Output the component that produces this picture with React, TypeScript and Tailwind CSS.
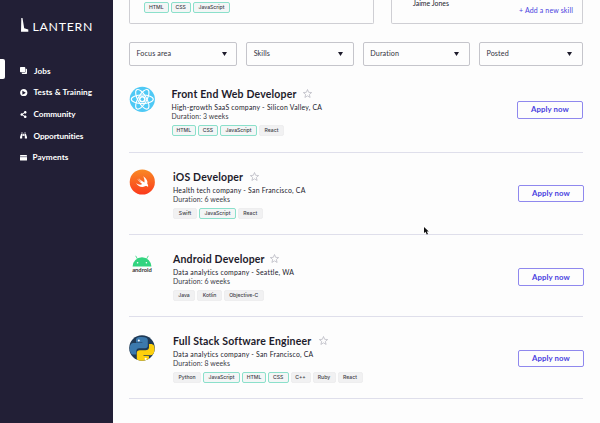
import React from "react";
import { FaPlayCircle, FaShareAlt, FaBinoculars, FaClone } from "react-icons/fa";

type TagData = { label: string; width: string; match?: boolean };

function Tag({ label, width, match }: TagData) {
  return (
    <span
      className={`${width} flex h-[10.5px] shrink-0 items-center justify-center rounded-[2px] border font-[Inter,sans-serif] text-[5.1px] leading-none font-medium whitespace-nowrap text-[#3c3c46] ${
        match ? "border-[#8be0cb] bg-[#f3f6f6]" : "border-[#eeeeef] bg-[#f1f1f2]"
      }`}
    >
      {label}
    </span>
  );
}

function LanternLogo() {
  return (
    <div className="flex h-[15px] items-end pl-[21px] text-white">
      <svg className="h-[14px] w-[8px]" viewBox="0 0 8 14">
        <path d="M0.3 0 H1.5 L3.2 10.2 L7.3 11.4 V13.7 H0 Z" fill="currentColor" />
      </svg>
      <span className="ml-[3.5px] text-[12.3px] leading-[11px] tracking-[0.72px]">LANTERN</span>
    </div>
  );
}

function CardIcon() {
  return (
    <svg className="h-[6px] w-[7px]" viewBox="0 0 7 6">
      <rect width="7" height="5.500" rx="0.6" fill="#fff" />
      <rect y="1.300" width="7" height="0.9" fill="#77758a" />
    </svg>
  );
}

const nav = [
  { label: "Jobs", icon: <FaClone className="size-[7px] -scale-x-100" />, shift: "pl-[5px]", spacing: "tracking-[0.1px]" },
  { label: "Tests & Training", icon: <FaPlayCircle className="size-[7.5px]" />, shift: "pl-[4.5px]", spacing: "tracking-[0.1px]" },
  { label: "Community", icon: <FaShareAlt className="size-[7px]" />, shift: "pl-[4.5px]", spacing: "tracking-[-0.04px]" },
  { label: "Opportunities", icon: <FaBinoculars className="size-[7px]" />, shift: "pl-[4.5px]", spacing: "tracking-[-0.1px]" },
  { label: "Payments", icon: <CardIcon />, shift: "pl-[3.5px]", spacing: "tracking-[0.02px]" },
];

function Sidebar() {
  return (
    <aside className="relative w-[113px] shrink-0 bg-[#221f36] pt-[17px]">
      <LanternLogo />
      <span className="absolute top-[59px] left-0 h-[20px] w-[4.5px] rounded-r-[2px] bg-white" />
      <nav className="mt-[28px] flex flex-col">
        {nav.map((n) => (
          <a key={n.label} className="flex h-[21.7px] items-center pl-[20px] text-[8.2px] font-bold text-white">
            <span className="flex w-[9px] shrink-0 justify-start text-white">{n.icon}</span>
            <span className={`${n.shift} ${n.spacing} whitespace-nowrap`}>{n.label}</span>
          </a>
        ))}
      </nav>
    </aside>
  );
}

function ReactLogo() {
  return (
    <svg className="size-[26px]" viewBox="0 0 26 26">
      <circle cx="13.300" cy="13.300" r="12.600" fill="#4fc9f5" />
      <g fill="none" stroke="#fff" strokeWidth="1.1">
        <ellipse cx="13.300" cy="13.300" rx="11" ry="4.3" />
        <ellipse cx="13.300" cy="13.300" rx="11" ry="4.3" transform="rotate(60 13.3 13.3)" />
        <ellipse cx="13.300" cy="13.300" rx="11" ry="4.3" transform="rotate(120 13.3 13.3)" />
      </g>
      <circle cx="13.300" cy="13.300" r="3.300" fill="#fff" />
      <circle cx="13.300" cy="13.300" r="1.700" fill="#4fc9f5" />
    </svg>
  );
}

function SwiftLogo() {
  return (
    <svg className="size-[26px]" viewBox="0 0 26 26">
      <defs>
        <linearGradient id="swift" x1="0" y1="0" x2="0" y2="1">
          <stop offset="0" stopColor="#f98a25" />
          <stop offset="1" stopColor="#fb3a1c" />
        </linearGradient>
      </defs>
      <circle cx="13.300" cy="13" r="12.600" fill="url(#swift)" />
      <path
        d="M14.2 7.2c3.4 2.2 4.8 5 4.1 7.6 1.1 1.4 1 2.6.7 3.1-.9-1.200-2-1.100-3-.600-2.900 1.400-6.700.500-9-3 2.400 1.500 4.700 1.800 6.200.800-2.100-1.600-4-3.800-5-5.300 1.700 1.500 3.300 2.600 4.300 3.200-1.400-1.500-2.600-3.200-3.300-4.200 1.900 1.900 4.200 3.700 6.200 4.800.400-2-.100-4.500-1.200-6.400z"
        fill="#fff"
      />
    </svg>
  );
}

function AndroidLogo() {
  return (
    <div className="flex w-[26px] flex-col items-center">
      <svg className="h-[12px] w-[20px]" viewBox="0 0 20 12">
        <path d="M0.600 11.500a9.400 9.300 0 0 1 18.800 0z" fill="#32d47f" />
        <path d="M5.600 4.300 3.700 .8M14.400 4.300l1.900-3.500" stroke="#32d47f" strokeWidth="0.8" />
        <circle cx="5.600" cy="7.800" r="0.8" fill="#fff" />
        <circle cx="14.400" cy="7.800" r="0.8" fill="#fff" />
      </svg>
      <span className="text-[5.800px] leading-[6px] font-bold text-[#333]">android</span>
    </div>
  );
}

function PythonLogo() {
  return (
    <svg className="size-[26px]" viewBox="0 0 26 26">
      <clipPath id="disc">
        <circle cx="13" cy="13" r="12.8" />
      </clipPath>
      <g clipPath="url(#disc)">
        <rect width="26" height="26" fill="#1f3a56" />
        <path d="M7 7.500V4.500C7 2.600 9 2 13 2s5.800.900 5.800 3v5.500c0 1.700-1 2.700-2.700 2.700h-5.800c-2 0-3 1.100-3 3v3.400H4.500c-2.600 0-3.700-2.900-3.700-6.200 0-3.400 1.200-5.300 3.800-5.300h8.800v-.600z" fill="#3b79ad" />
        <path d="M20 9h1.800c2.800 0 4 2.200 4 5.300s-1.200 5.900-4 5.900h-7.300v.800h5.400v2.700c0 2-2 2.800-5.400 2.800-4 0-6.700-.800-6.700-3.300v-5.300c0-1.700 1.100-2.700 2.900-2.700h5.900c2.100 0 3.400-1.100 3.400-3z" fill="#fdd00d" />
        <circle cx="9.800" cy="5.600" r="1" fill="#fff" />
        <circle cx="16.700" cy="23.800" r="1.100" fill="#fff" />
      </g>
    </svg>
  );
}

function Star() {
  return (
    <svg className="size-[9px] shrink-0" viewBox="0 0 18 18" fill="none" stroke="#b7b7c0" strokeWidth="1.500" strokeLinejoin="round">
      <path d="M9 1l2.300 5.600 6 .500-4.600 3.900 1.500 5.900L9 13.700l-5.200 3.200 1.500-5.900L.700 7.100l6-.500z" />
    </svg>
  );
}

type Job = {
  title: string;
  titleWidth: string;
  about: string;
  duration: string;
  row: string;
  indent: string;
  logo: React.ReactNode;
  logoTop: string;
  button: string;
  tags: TagData[];
};

const jobs: Job[] = [
  {
    title: "Front End Web Developer",
    titleWidth: "w-[131.5px]",
    about: "High-growth SaaS company - Silicon Valley, CA",
    duration: "Duration: 3 weeks",
    row: "h-[86px] pt-[18.5px]",
    indent: "ml-[16.5px]",
    logo: <ReactLogo />,
    logoTop: "mt-0",
    button: "mt-[15.5px] pt-0",
    tags: [
      { label: "HTML", width: "w-[24.5px]", match: true },
      { label: "CSS", width: "w-[20px]", match: true },
      { label: "JavaScript", width: "w-[37px]", match: true },
      { label: "React", width: "w-[25px]" },
    ],
  },
  {
    title: "iOS Developer",
    titleWidth: "w-[77px]",
    about: "Health tech company - San Francisco, CA",
    duration: "Duration: 6 weeks",
    row: "h-[82px] pt-[15.5px]",
    indent: "ml-[18px]",
    logo: <SwiftLogo />,
    logoTop: "mt-0",
    button: "mt-[16px] -mr-px pt-[2px]",
    tags: [
      { label: "Swift", width: "w-[24px]" },
      { label: "JavaScript", width: "w-[37px]", match: true },
      { label: "React", width: "w-[24.5px]" },
    ],
  },
  {
    title: "Android Developer",
    titleWidth: "w-[97px]",
    about: "Data analytics company - Seattle, WA",
    duration: "Duration: 6 weeks",
    row: "h-[82px] pt-[15.5px]",
    indent: "ml-[18px]",
    logo: <AndroidLogo />,
    logoTop: "mt-[4px]",
    button: "mt-[17.5px] -mr-px pt-[2px]",
    tags: [
      { label: "Java", width: "w-[22px]" },
      { label: "Kotlin", width: "w-[25px]" },
      { label: "Objective-C", width: "w-[39.500px]" },
    ],
  },
  {
    title: "Full Stack Software Engineer",
    titleWidth: "w-[146px]",
    about: "Data analytics company - San Francisco, CA",
    duration: "Duration: 8 weeks",
    row: "h-[82px] pt-[15.5px]",
    indent: "ml-[18px]",
    logo: <PythonLogo />,
    logoTop: "mt-[2.5px]",
    button: "mt-[17px] -mr-px pt-[2px]",
    tags: [
      { label: "Python", width: "w-[28px]" },
      { label: "JavaScript", width: "w-[37px]", match: true },
      { label: "HTML", width: "w-[24px]", match: true },
      { label: "CSS", width: "w-[20.5px]", match: true },
      { label: "C++", width: "w-[20px]" },
      { label: "Ruby", width: "w-[23px]" },
      { label: "React", width: "w-[25px]" },
    ],
  },
];

function JobRow({ job }: { job: Job }) {
  return (
    <article className={`${job.row} flex w-[454px] items-start border-b border-[#dfdfeb]`}>
      <div className={`${job.logoTop} w-[26px] shrink-0`}>{job.logo}</div>
      <div className={`${job.indent} min-w-0 flex-1`}>
        <div className="flex h-[16px] items-center">
          <h2 className={`${job.titleWidth} shrink-0 text-[10.5px] leading-[16px] font-bold tracking-[0.18px] whitespace-nowrap text-[#1d1b2b]`}>
            {job.title}
          </h2>
          <Star />
        </div>
        <p className="mt-[0.5px] text-[6.9px] leading-[10px] tracking-[0.22px] whitespace-nowrap text-[#22222c]">{job.about}</p>
        <p className="text-[6.9px] leading-[9px] tracking-[0.12px] whitespace-nowrap text-[#3a3a44]">{job.duration}</p>
        <div className="mt-[4px] flex gap-[2px]">
          {job.tags.map((t) => (
            <Tag key={t.label} {...t} />
          ))}
        </div>
      </div>
      <button className={`${job.button} h-[17.5px] w-[66px] shrink-0 rounded-[2px] border border-[#8f88ee] text-[7.8px] leading-none font-bold tracking-[0.1px] text-[#4a3fe0]`}>
        Apply now
      </button>
    </article>
  );
}

const filters = [
  { label: "Focus area", width: "w-[108px]" },
  { label: "Skills", width: "w-[107.5px]" },
  { label: "Duration", width: "w-[107px]" },
  { label: "Posted", width: "w-[104px]" },
];

export default function App() {
  return (
    <div className="relative flex h-[423px] w-[600px] overflow-hidden bg-[#fdfdfd] font-[Lato,'Open_Sans',sans-serif]">
      <Sidebar />
      <main className="w-[471px] shrink-0 pl-[16px]">
        <section className="flex h-[23.5px] w-[454px] justify-between">
          <div className="flex w-[245px] gap-[2px] rounded-b-[2px] border border-t-0 border-[#cfcfd4] pt-[2px] pl-[14px]">
            <Tag label="HTML" width="w-[24.5px]" match />
            <Tag label="CSS" width="w-[20.5px]" match />
            <Tag label="JavaScript" width="w-[37px]" match />
          </div>
          <div className="flex w-[192px] justify-between rounded-b-[2px] border border-t-0 border-[#cfcfd4] pr-[9px] pl-[21px]">
            <span className="-mt-[2px] text-[6.9px] leading-[10px] text-[#22222c]">Jaime Jones</span>
            <a className="mt-[4.5px] text-[7px] leading-[10px] tracking-[0.15px] text-[#4a3fe0]">+ Add a new skill</a>
          </div>
        </section>
        <section className="mt-[18.5px] mb-px flex h-[24px] w-[454px] justify-between">
          {filters.map((f) => (
            <div key={f.label} className={`${f.width} flex items-center justify-between rounded-[2px] border border-[#c5c5cb] pr-[9.5px] pl-[6.5px]`}>
              <span className="text-[7.2px] leading-[10px] tracking-[0.1px] text-[#33333d]">{f.label}</span>
              <svg className="h-[4px] w-[5px]" viewBox="0 0 5 4">
                <path d="M0 0H5L2.500 4Z" fill="#1d1b2b" />
              </svg>
            </div>
          ))}
        </section>
        <section className="w-[455px]">
          {jobs.map((j) => (
            <JobRow key={j.title} job={j} />
          ))}
        </section>
      </main>
      <svg className="absolute top-[227px] left-[424px] h-[8px] w-[5px]" viewBox="0 0 10 16">
        <path d="M0 0V12L3 9.500 5.500 15 8 14 5.500 8.800H9.500Z" fill="#111" />
      </svg>
    </div>
  );
}
